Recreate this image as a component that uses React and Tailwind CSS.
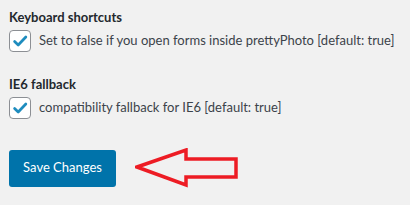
import React from 'react';

const Check = () => (
  <span className="flex h-[22px] w-[22px] shrink-0 items-center justify-center rounded-[4px] border border-[#8c8f94] bg-white">
    <svg width="18" height="18" viewBox="0 0 20 20">
      <path d="M4 10.5l4 4L16.5 5.5" fill="none" stroke="#1e8cbe" strokeWidth="3" strokeLinecap="round" strokeLinejoin="round" />
    </svg>
  </span>
);

const Option = ({ title, label }) => (
  <div>
    <h3 className="text-[13px] font-bold leading-[18px] text-[#23282d]">{title}</h3>
    <label className="mt-[4px] flex items-center gap-[8px] whitespace-nowrap text-[13px] text-[#3c434a]">
      <Check />
      <span>{label}</span>
    </label>
  </div>
);

export default function App() {
  return (
    <div className="h-[205px] w-[410px] overflow-hidden bg-[#f1f1f1] px-[9px] pt-[8px]" style={{ fontFamily: 'Lato, "Open Sans", sans-serif' }}>
      <Option title="Keyboard shortcuts" label="Set to false if you open forms inside prettyPhoto [default: true]" />
      <div className="mt-[23px]">
        <Option title="IE6 fallback" label="compatibility fallback for IE6 [default: true]" />
      </div>
      <div className="mt-[29px] flex items-center gap-[20px]">
        <button className="h-[37px] w-[107px] rounded-[3px] bg-[#0073aa] text-[13px] text-white">Save Changes</button>
        <svg width="104" height="40" viewBox="0 0 104 40" className="-ml-[1px]">
          <path d="M2 19 L51 2 L51 11 L101 11 L101 29 L51 29 L51 37 Z" fill="none" stroke="#ed1c24" strokeWidth="3.5" strokeLinejoin="miter" />
        </svg>
      </div>
    </div>
  );
}
